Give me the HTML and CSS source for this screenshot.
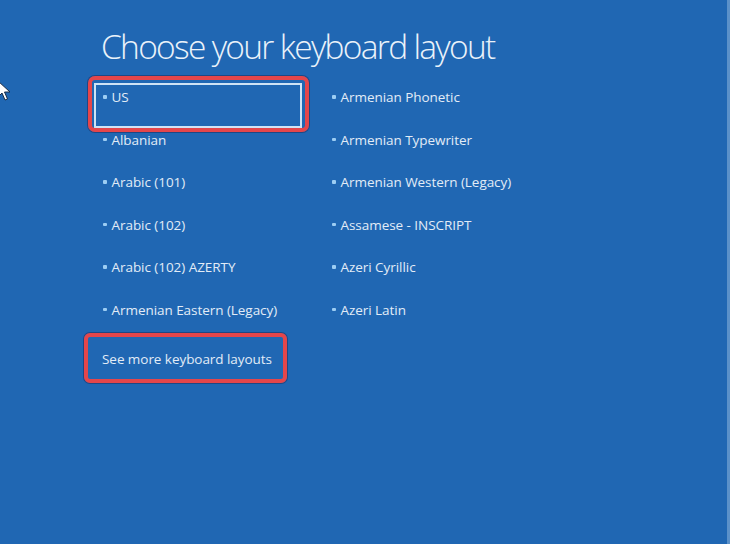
FILE: index.html
```html
<!DOCTYPE html>
<html lang="en">
<head>
<meta charset="utf-8">
<title>Choose your keyboard layout</title>
<link rel="stylesheet" href="styles.css">
</head>
<body>
<div class="screen">
  <svg class="cursor" width="14" height="22" viewBox="0 0 14 22" aria-hidden="true">
    <path d="M1 1 L1 17 L5 13 L8 20 L10.5 19 L7.5 12 L13 12 Z" fill="#ffffff" stroke="#1b2b44" stroke-width="1"/>
  </svg>
  <main class="content">
    <h1 class="title">Choose your keyboard layout</h1>
    <ul class="layouts">
      <li class="item focused"><span class="dot"></span>US</li>
      <li class="item"><span class="dot"></span>Armenian Phonetic</li>
      <li class="item"><span class="dot"></span>Albanian</li>
      <li class="item"><span class="dot"></span>Armenian Typewriter</li>
      <li class="item"><span class="dot"></span>Arabic (101)</li>
      <li class="item"><span class="dot"></span>Armenian Western (Legacy)</li>
      <li class="item"><span class="dot"></span>Arabic (102)</li>
      <li class="item"><span class="dot"></span>Assamese - INSCRIPT</li>
      <li class="item"><span class="dot"></span>Arabic (102) AZERTY</li>
      <li class="item"><span class="dot"></span>Azeri Cyrillic</li>
      <li class="item"><span class="dot"></span>Armenian Eastern (Legacy)</li>
      <li class="item"><span class="dot"></span>Azeri Latin</li>
    </ul>
    <a class="more" href="#">See more keyboard layouts</a>
  </main>
</div>
</body>
</html>
```

FILE: styles.css
```css
html, body {
  margin: 0;
  padding: 0;
}

body {
  background: #2067b3;
  font-family: "Open Sans", "Noto Sans", "Liberation Sans", sans-serif;
  overflow: hidden;
}

.screen {
  position: relative;
  width: 727px;
  height: 544px;
  border-right: 3px solid #5b91c9;
  background: #2067b3;
}

.cursor {
  position: absolute;
  left: -3px;
  top: 80px;
}

.content {
  padding: 25px 0 0 95px;
}

.title {
  margin: 0 0 0 6px;
  font-weight: 300;
  font-size: 33.5px;
  line-height: 42px;
  letter-spacing: -1.7px;
  color: #eaf2fa;
  height: 59px;
}

.layouts {
  list-style: none;
  margin: 0;
  padding: 0;
  display: grid;
  grid-template-columns: 206px 206px;
  grid-auto-rows: 42.6px;
  column-gap: 23px;
}

.item {
  position: relative;
  display: flex;
  align-items: flex-start;
  gap: 5px;
  padding: 4px 0 0 8px;
  font-size: 13.5px;
  line-height: 18px;
  color: #e2ecf7;
  letter-spacing: -0.05px;
}

.dot {
  width: 3.5px;
  height: 3.5px;
  margin-top: 7px;
  background: #9ccdf3;
  border-radius: 1px;
  flex: none;
}

.focused {
  outline: 2px solid #cfe3f5;
  outline-offset: -1px;
}

.focused::after {
  content: "";
  position: absolute;
  top: -8px;
  left: -7px;
  right: -8px;
  bottom: -5px;
  border: 4px solid #e4464b;
  border-radius: 7px;
  box-shadow: 0 0 0 1px rgba(30, 45, 95, 0.55);
}

.more {
  position: relative;
  display: inline-block;
  margin: 10px 0 0 7px;
  font-size: 13.5px;
  line-height: 18px;
  letter-spacing: -0.05px;
  color: #e2ecf7;
  text-decoration: none;
}

.more::after {
  content: "";
  position: absolute;
  top: -17px;
  left: -18px;
  right: -15px;
  bottom: -15px;
  border: 4px solid #e4464b;
  border-radius: 6px;
  box-shadow: 0 0 0 1px rgba(30, 45, 95, 0.55);
}
```
